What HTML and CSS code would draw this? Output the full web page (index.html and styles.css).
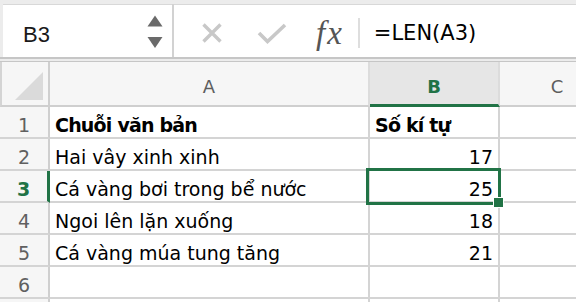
FILE: index.html
```html
<!DOCTYPE html>
<html>
<head>
<meta charset="utf-8">
<link rel="stylesheet" href="styles.css">
</head>
<body>
<div class="app">
  <div class="toolbar">
    <div class="namebox">
      <span class="ref">B3</span>
      <svg class="spin" width="16" height="35" viewBox="0 0 16 35">
        <polygon points="8,1.5 15.5,12.5 0.5,12.5" fill="#6a6a6a"/>
        <polygon points="0.5,23 15.5,23 8,34" fill="#6a6a6a"/>
      </svg>
    </div>
    <div class="tsep"></div>
    <div class="fbar">
      <svg class="ico-x" width="22" height="22" viewBox="0 0 22 22">
        <path d="M2.5 2.5 L19.5 19.5 M19.5 2.5 L2.5 19.5" stroke="#c8c8c8" stroke-width="3.4" fill="none"/>
      </svg>
      <svg class="ico-check" width="30" height="21" viewBox="0 0 30 21">
        <polyline points="2,10 10.5,18.5 28,2" stroke="#c8c8c8" stroke-width="3.6" fill="none"/>
      </svg>
      <span class="fx">fx</span>
      <div class="fsep"></div>
      <span class="formula">=LEN(A3)</span>
    </div>
  </div>
  <div class="tb-lines"></div>
  <div class="sheet">
    <div class="hd corner">
      <svg width="28" height="28" viewBox="0 0 28 28"><polygon points="28,0 28,28 0,28" fill="#dadada"/></svg>
    </div>
    <div class="hd col">A</div>
    <div class="hd col sel">B</div>
    <div class="hd col">C</div>

    <div class="rh">1</div>
    <div class="c b">Chuỗi văn bản</div>
    <div class="c b">Số kí tự</div>
    <div class="c"></div>

    <div class="rh">2</div>
    <div class="c">Hai vây xinh xinh</div>
    <div class="c n">17</div>
    <div class="c"></div>

    <div class="rh sel">3</div>
    <div class="c">Cá vàng bơi trong bể nước</div>
    <div class="c n">25</div>
    <div class="c"></div>

    <div class="rh">4</div>
    <div class="c">Ngoi lên lặn xuống</div>
    <div class="c n">18</div>
    <div class="c"></div>

    <div class="rh">5</div>
    <div class="c">Cá vàng múa tung tăng</div>
    <div class="c n">21</div>
    <div class="c"></div>

    <div class="rh">6</div>
    <div class="c"></div>
    <div class="c"></div>
    <div class="c"></div>

    <div class="rh"></div>
    <div class="c"></div>
    <div class="c"></div>
    <div class="c"></div>

    <div class="selection"></div>
    <div class="handle"></div>
  </div>
</div>
</body>
</html>
```

FILE: styles.css
```css
html, body {
  margin: 0;
  padding: 0;
  background: #ffffff;
}
.app {
  width: 576px;
  height: 302px;
  overflow: hidden;
}
.toolbar {
  box-sizing: border-box;
  height: 57px;
  background: #ececec;
  border-top: 4px solid #ececec;
  display: flex;
  padding-left: 3px;
}
.namebox {
  width: 169px;
  background: #ffffff;
  border-top: 1px solid #d8d8d8;
  display: flex;
  align-items: center;
  justify-content: space-between;
  padding: 0 9px 0 20px;
  box-sizing: border-box;
}
.ref {
  font-family: "Liberation Sans", Arial, sans-serif;
  font-size: 22px;
  color: #1a1a1a;
  padding-top: 8px;
}
.spin {
  display: block;
}
.tsep {
  width: 2px;
  background: #d2d2d2;
}
.fbar {
  flex: 1;
  background: #ffffff;
  border-top: 1px solid #d8d8d8;
  display: flex;
  align-items: center;
  padding-top: 4px;
  padding-left: 27px;
  box-sizing: border-box;
}
.ico-x, .ico-check {
  display: block;
}
.ico-check {
  margin-left: 34px;
}
.fx {
  margin-left: 29px;
  font-family: "Liberation Serif", "Times New Roman", serif;
  font-style: italic;
  font-size: 33px;
  letter-spacing: 2px;
  color: #555555;
  line-height: 30px;
}
.fsep {
  width: 2px;
  height: 30px;
  background: #dedede;
  margin-left: 14px;
}
.formula {
  margin-left: 14px;
  font-family: "DejaVu Sans", sans-serif;
  font-size: 21px;
  color: #000000;
  line-height: 24px;
}
.tb-lines {
  height: 2px;
  background: #ececec;
  border-top: 2px solid #c6c6c6;
  border-bottom: 1px solid #c6c6c6;
}
.sheet {
  position: relative;
  display: grid;
  grid-template-columns: 50px 320px 130px 116px;
  grid-template-rows: 45px repeat(6, 32px) 32px;
  font-family: "DejaVu Sans", sans-serif;
  height: 240px;
  overflow: hidden;
}
.hd {
  box-sizing: border-box;
  background: #f6f6f6;
  border-bottom: 2px solid #cfcfcf;
  border-right: 2px solid #dcdcdc;
}
.corner {
  display: flex;
  align-items: flex-end;
  justify-content: flex-end;
  padding: 0 5px 5px 0;
  border-left: 2px solid #d4d4d4;
  border-right: 2px solid #cfcfcf;
}
.corner svg {
  display: block;
}
.col {
  display: flex;
  align-items: flex-end;
  justify-content: center;
  font-size: 18px;
  line-height: 22px;
  color: #5e5e5e;
  padding-bottom: 7px;
}
.col.sel {
  background: #e6e6e6;
  color: #217346;
  font-weight: bold;
  border-bottom: 3px solid #217346;
  padding-bottom: 6px;
}
.rh {
  box-sizing: border-box;
  background: #f6f6f6;
  border-right: 2px solid #cfcfcf;
  border-bottom: 2px solid #d4d4d4;
  display: flex;
  align-items: flex-end;
  justify-content: center;
  font-size: 19px;
  line-height: 22px;
  color: #606060;
  padding-bottom: 1px;
}
.rh.sel {
  color: #217346;
  font-weight: bold;
  border-right: 3px solid #217346;
}
.c {
  box-sizing: border-box;
  border-right: 2px solid #d4d4d4;
  border-bottom: 2px solid #d4d4d4;
  display: flex;
  align-items: flex-end;
  padding: 0 5px 1px 5px;
  font-size: 19px;
  line-height: 22px;
  color: #000000;
  white-space: nowrap;
}
.c.b {
  font-weight: bold;
  letter-spacing: -0.8px;
}
.c.n {
  justify-content: flex-end;
}
.selection {
  position: absolute;
  left: 366px;
  top: 106px;
  width: 135px;
  height: 37px;
  box-sizing: border-box;
  border: 3px solid #217346;
}
.handle {
  position: absolute;
  left: 494px;
  top: 136px;
  width: 9px;
  height: 9px;
  background: #217346;
  box-shadow: 0 0 0 1px #ffffff;
}
```
